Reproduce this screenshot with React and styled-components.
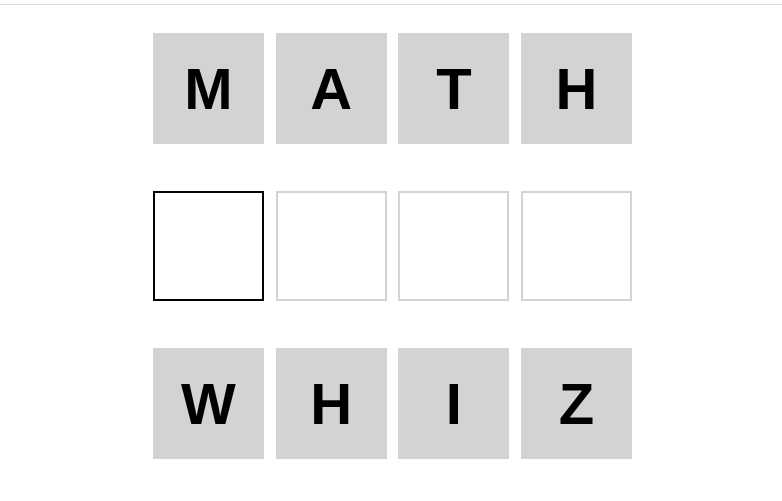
import React from "react";
import styled, { createGlobalStyle } from "styled-components";

const GlobalStyle = createGlobalStyle`
  body {
    margin: 0;
    background: #ffffff;
    font-family: "Liberation Sans", Arial, sans-serif;
  }
`;

const rows = [
  { letters: ["M", "A", "T", "H"], filled: true },
  { letters: ["", "", "", ""], filled: false, active: 0 },
  { letters: ["W", "H", "I", "Z"], filled: true },
];

export default function App() {
  return (
    <>
      <GlobalStyle />
      <TopBar />
      <Board>
        {rows.map((row, r) => (
          <Row key={r}>
            {row.letters.map((letter, i) => (
              <Tile
                key={i}
                $filled={row.filled}
                $active={row.active === i}
              >
                {letter}
              </Tile>
            ))}
          </Row>
        ))}
      </Board>
    </>
  );
}

const TopBar = styled.div`
  height: 4px;
  border-bottom: 1px solid #dcdcdc;
`;

const Board = styled.main`
  display: flex;
  flex-direction: column;
  align-items: center;
  gap: 47px;
  padding: 28px 0 0 3px;
`;

const Row = styled.div`
  display: flex;
  gap: 11.7px;
`;

const Tile = styled.div`
  box-sizing: border-box;
  width: 111px;
  height: 110.5px;
  display: flex;
  align-items: center;
  justify-content: center;
  font-size: 58px;
  font-weight: 700;
  color: #000;
  background: ${(p) => (p.$filled ? "#d3d3d3" : "#ffffff")};
  border: ${(p) =>
    p.$filled ? "none" : p.$active ? "2px solid #000" : "2px solid #d3d3d3"};
`;
